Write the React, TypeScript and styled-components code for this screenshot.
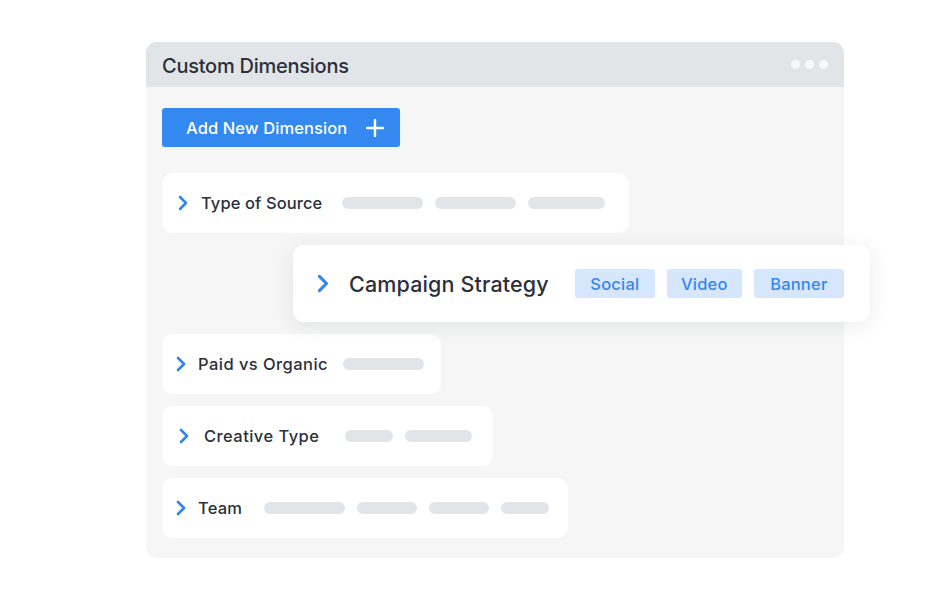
import React from "react";
import styled, { createGlobalStyle } from "styled-components";

const Global = createGlobalStyle`
  html, body { margin: 0; padding: 0; background: #ffffff; }
  body { font-family: Inter, "Noto Sans", sans-serif; }
`;

const Page = styled.div`
  width: 943px;
  height: 600px;
  padding: 42px 0 0 146px;
  box-sizing: border-box;
`;

const Panel = styled.div`
  width: 698px;
  height: 516px;
  border-radius: 11px;
  background: #f6f6f6;
  display: flex;
  flex-direction: column;
`;

const Header = styled.div`
  height: 45px;
  background: #e2e5e8;
  border-radius: 11px 11px 0 0;
  display: flex;
  align-items: center;
  justify-content: space-between;
  padding: 3px 16px 0 16px;
  box-sizing: border-box;
  flex-shrink: 0;
`;

const Title = styled.div`
  font-size: 20px;
  font-weight: 500;
  color: #2b303b;
  letter-spacing: -0.25px;
`;

const Dots = styled.div`
  display: flex;
  gap: 5px;
  margin-top: -3px;
`;

const Dot = styled.span`
  width: 9px;
  height: 9px;
  border-radius: 50%;
  background: #f7f8f9;
`;

const Body = styled.div`
  padding: 21px 0 0 16px;
  display: flex;
  flex-direction: column;
  align-items: flex-start;
`;

const AddButton = styled.button`
  width: 238px;
  height: 39px;
  border: none;
  border-radius: 3px;
  background: #3389f0;
  color: #ffffff;
  font-family: inherit;
  font-size: 16.5px;
  font-weight: 500;
  letter-spacing: 0.1px;
  display: flex;
  align-items: center;
  padding: 0 16px 0 24px;
  justify-content: space-between;
  margin-bottom: 26px;
`;

const Row = styled.div<{ $w: number; $pl: number; $mt: number }>`
  width: ${(p) => p.$w}px;
  height: 60px;
  margin-top: ${(p) => p.$mt}px;
  box-sizing: border-box;
  background: #ffffff;
  border-radius: 11px;
  display: flex;
  align-items: center;
  padding-left: ${(p) => p.$pl}px;
`;

const Label = styled.span<{ $gap: number; $after: number; $ls: number }>`
  font-size: 16.5px;
  font-weight: 500;
  color: #2b303b;
  margin-left: ${(p) => p.$gap}px;
  margin-right: ${(p) => p.$after}px;
  white-space: nowrap;
  letter-spacing: ${(p) => p.$ls}px;
`;

const Bars = styled.div`
  display: flex;
  gap: 12px;
`;

const Bar = styled.span<{ $w: number }>`
  width: ${(p) => p.$w}px;
  height: 12px;
  border-radius: 6px;
  background: #e2e5e8;
`;

const FeatureCard = styled.div`
  width: 577px;
  height: 77px;
  margin: 12px 0 0 131px;
  box-sizing: border-box;
  background: #ffffff;
  border-radius: 11px;
  box-shadow: 0 4px 22px rgba(30, 40, 60, 0.09);
  display: flex;
  align-items: center;
  padding-left: 24px;
  position: relative;
`;

const FeatureLabel = styled.span`
  font-size: 21.5px;
  font-weight: 500;
  color: #2b303b;
  margin-left: 20px;
  margin-right: 26px;
  white-space: nowrap;
  letter-spacing: 0.15px;
`;

const Tags = styled.div`
  display: flex;
  gap: 12px;
`;

const Tag = styled.span<{ $w: number }>`
  width: ${(p) => p.$w}px;
  height: 29px;
  border-radius: 3px;
  background: #d5e6fd;
  color: #3686ee;
  font-size: 16.5px;
  font-weight: 500;
  letter-spacing: 0.2px;
  display: flex;
  align-items: center;
  justify-content: center;
`;

const Chevron = ({ w, h }: { w: number; h: number }) => (
  <svg width={w} height={h} viewBox="0 0 10 16" style={{ flexShrink: 0 }}>
    <polyline
      points="2,2 8,8 2,14"
      fill="none"
      stroke="#2f86ee"
      strokeWidth="2.6"
      strokeLinecap="round"
      strokeLinejoin="round"
    />
  </svg>
);

const Plus = () => (
  <svg width="18" height="18" viewBox="0 0 18 18">
    <path d="M9 1v16M1 9h16" stroke="#fff" strokeWidth="2.4" strokeLinecap="round" />
  </svg>
);

export default function App() {
  return (
    <>
      <Global />
      <Page>
        <Panel>
          <Header>
            <Title>Custom Dimensions</Title>
            <Dots>
              <Dot />
              <Dot />
              <Dot />
            </Dots>
          </Header>
          <Body>
            <AddButton>
              <span>Add New Dimension</span>
              <Plus />
            </AddButton>
            <Row $w={467} $pl={16} $mt={0}>
              <Chevron w={10} h={16} />
              <Label $gap={13} $after={20} $ls={0.1}>Type of Source</Label>
              <Bars>
                <Bar $w={81} />
                <Bar $w={81} />
                <Bar $w={77} />
              </Bars>
            </Row>
            <FeatureCard>
              <Chevron w={12} h={19} />
              <FeatureLabel>Campaign Strategy</FeatureLabel>
              <Tags>
                <Tag $w={80}>Social</Tag>
                <Tag $w={75}>Video</Tag>
                <Tag $w={90}>Banner</Tag>
              </Tags>
            </FeatureCard>
            <Row $w={279} $pl={14} $mt={12}>
              <Chevron w={10} h={16} />
              <Label $gap={12} $after={15} $ls={0.45}>Paid vs Organic</Label>
              <Bars>
                <Bar $w={81} />
              </Bars>
            </Row>
            <Row $w={331} $pl={17} $mt={12}>
              <Chevron w={10} h={16} />
              <Label $gap={15} $after={26} $ls={0.45}>Creative Type</Label>
              <Bars>
                <Bar $w={48} />
                <Bar $w={67} />
              </Bars>
            </Row>
            <Row $w={406} $pl={14} $mt={12}>
              <Chevron w={10} h={16} />
              <Label $gap={12} $after={22} $ls={0.2}>Team</Label>
              <Bars>
                <Bar $w={81} />
                <Bar $w={60} />
                <Bar $w={60} />
                <Bar $w={48} />
              </Bars>
            </Row>
          </Body>
        </Panel>
      </Page>
    </>
  );
}
